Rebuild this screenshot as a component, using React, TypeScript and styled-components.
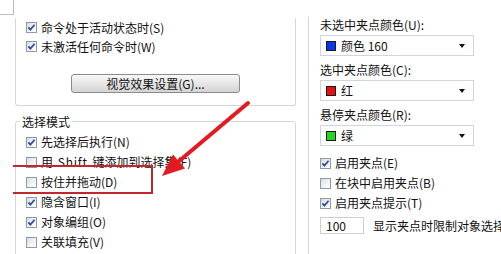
import React from "react";
import styled, { createGlobalStyle } from "styled-components";

const GlobalStyle = createGlobalStyle`
  html, body { margin: 0; padding: 0; background: #fff; }
  body {
    width: 501px;
    height: 254px;
    overflow: hidden;
    font-family: "Noto Sans CJK SC", "Noto Sans", sans-serif;
    font-size: 12px;
    color: #111;
  }
`;

const Page = styled.div`
  position: relative;
  width: 501px;
  height: 254px;
  overflow: hidden;
  display: flex;
  align-items: flex-start;
  background: #fff;
`;

const LeftCol = styled.div`
  width: 296px;
  flex-shrink: 0;
  display: flex;
  flex-direction: column;
`;

const Stub = styled.div`
  width: 14px;
  height: 15px;
  box-sizing: border-box;
  border-right: 1px solid #bdbdbd;
  border-bottom: 1px solid #bdbdbd;
`;

const UpperGroup = styled.div`
  margin: 3px 0 0 15px;
  width: 281px;
  height: 88px;
  box-sizing: border-box;
  border: 1px solid #d6d6d6;
  border-top: none;
  border-radius: 0 0 3px 3px;
  padding-left: 10px;
  display: flex;
  flex-direction: column;
`;

const LowerGroup = styled.div`
  margin: 15px 0 0 15px;
  width: 281px;
  height: 160px;
  box-sizing: border-box;
  border: 1px solid #d6d6d6;
  border-radius: 3px;
  padding-left: 10px;
  display: flex;
  flex-direction: column;
`;

const Legend = styled.div`
  margin: -8px 0 0 -6px;
  padding: 0 2px;
  width: fit-content;
  height: 16px;
  line-height: 16px;
  background: #fff;
`;

const RowList = styled.div<{ $top: number }>`
  margin-top: ${(p) => p.$top}px;
  display: flex;
  flex-direction: column;
`;

const CheckRow = styled.div<{ $h: number }>`
  height: ${(p) => p.$h}px;
  display: flex;
  align-items: center;
  gap: 4px;
  white-space: nowrap;
  line-height: 16px;
`;

const Box = styled.span`
  width: 11px;
  height: 11px;
  box-sizing: border-box;
  border: 1px solid #8d9aa7;
  background: linear-gradient(135deg, #d9dcdf 0%, #f4f4f4 60%, #ffffff 100%);
  display: flex;
  align-items: center;
  justify-content: center;
  flex-shrink: 0;
`;

const Latin = styled.span`
  letter-spacing: 0.8px;
  margin: 0 2px;
`;

const VisualButton = styled.div`
  margin: 18px 0 0 45px;
  width: 169px;
  height: 19px;
  box-sizing: border-box;
  border: 1px solid #8c8c8c;
  border-radius: 3px;
  background: linear-gradient(#f8f8f8, #e8e8e8 45%, #d4d4d4);
  display: flex;
  align-items: center;
  justify-content: center;
  line-height: 16px;
`;

const RightCol = styled.div`
  margin: 17px 0 0 12px;
  width: 230px;
  height: 260px;
  flex-shrink: 0;
  box-sizing: border-box;
  border-left: 1px solid #d6d6d6;
  padding-left: 11px;
  display: flex;
  flex-direction: column;
`;

const FieldLabel = styled.div<{ $top: number }>`
  margin-top: ${(p) => p.$top}px;
  height: 16px;
  line-height: 16px;
  white-space: nowrap;
`;

const Dropdown = styled.div`
  margin-top: 2px;
  width: 154px;
  height: 21px;
  box-sizing: border-box;
  border: 1px solid #cfd5da;
  background: #fff;
  display: flex;
  align-items: center;
  gap: 5px;
  padding: 0 8px 0 5px;
  line-height: 16px;
  white-space: nowrap;
`;

const Swatch = styled.span<{ $color: string }>`
  width: 10px;
  height: 10px;
  box-sizing: border-box;
  border: 1px solid #1a1a1a;
  background: ${(p) => p.$color};
  flex-shrink: 0;
`;

const DropArrow = styled.span`
  margin-left: auto;
  width: 0;
  height: 0;
  border-left: 3.5px solid transparent;
  border-right: 3.5px solid transparent;
  border-top: 4px solid #111;
`;

const InputRow = styled.div`
  margin-top: 4px;
  display: flex;
  align-items: center;
  gap: 9px;
  white-space: nowrap;
  line-height: 16px;
`;

const NumInput = styled.input`
  width: 44px;
  height: 17px;
  box-sizing: border-box;
  border: 1px solid #cfcfcf;
  padding: 0 0 0 5px;
  margin: 0;
  font-family: "Noto Sans CJK SC", "Noto Sans", sans-serif;
  font-size: 12px;
  color: #111;
  outline: none;
  background: #fff;
`;

const RedBox = styled.div`
  position: absolute;
  left: 13px;
  top: 165px;
  width: 140px;
  height: 29px;
  box-sizing: border-box;
  border: 2px solid #c3272e;
  border-left: none;
  pointer-events: none;
`;

const ArrowLayer = styled.svg`
  position: absolute;
  left: 0;
  top: 0;
  width: 501px;
  height: 254px;
  pointer-events: none;
`;

const Check: React.FC<{
  checked?: boolean;
  label: React.ReactNode;
  h?: number;
}> = ({ checked, label, h = 20 }) => (
  <CheckRow $h={h}>
    <Box>
      {checked && (
        <svg width="9" height="9" viewBox="0 0 9 9">
          <path
            d="M1.4 4.4 L3.4 6.6 L7.6 1.8"
            fill="none"
            stroke="#2b4aa3"
            strokeWidth="1.7"
          />
        </svg>
      )}
    </Box>
    <span>{label}</span>
  </CheckRow>
);

export default function App() {
  return (
    <>
      <GlobalStyle />
      <Page>
        <LeftCol>
          <Stub />
          <UpperGroup>
            <RowList $top={0}>
              <Check checked h={19} label="命令处于活动状态时(S)" />
              <Check checked h={19} label="未激活任何命令时(W)" />
            </RowList>
            <VisualButton>视觉效果设置(G)...</VisualButton>
          </UpperGroup>
          <LowerGroup>
            <Legend>选择模式</Legend>
            <RowList $top={2}>
              <Check checked label="先选择后执行(N)" />
              <Check
                label={
                  <>
                    用 <Latin>Shift</Latin> 键添加到选择集(F)
                  </>
                }
              />
              <Check label="按住并拖动(D)" />
              <Check checked label="隐含窗口(I)" />
              <Check checked label="对象编组(O)" />
              <Check label="关联填充(V)" />
            </RowList>
          </LowerGroup>
        </LeftCol>
        <RightCol>
          <FieldLabel $top={0}>未选中夹点颜色(U):</FieldLabel>
          <Dropdown>
            <Swatch $color="#0a35e8" />
            <span>颜色 160</span>
            <DropArrow />
          </Dropdown>
          <FieldLabel $top={6}>选中夹点颜色(C):</FieldLabel>
          <Dropdown>
            <Swatch $color="#ea1010" />
            <span>红</span>
            <DropArrow />
          </Dropdown>
          <FieldLabel $top={6}>悬停夹点颜色(R):</FieldLabel>
          <Dropdown>
            <Swatch $color="#22d622" />
            <span>绿</span>
            <DropArrow />
          </Dropdown>
          <RowList $top={7}>
            <Check checked label="启用夹点(E)" />
            <Check label="在块中启用夹点(B)" />
            <Check checked label="启用夹点提示(T)" />
          </RowList>
          <InputRow>
            <NumInput readOnly defaultValue="100" />
            <span>显示夹点时限制对象选择</span>
          </InputRow>
        </RightCol>
        <RedBox />
        <ArrowLayer viewBox="0 0 501 254">
          <line
            x1="248"
            y1="103"
            x2="178"
            y2="162"
            stroke="#e21b22"
            strokeWidth="4"
            strokeLinecap="round"
          />
          <polygon points="162,176 185,168.5 173,154.5" fill="#e21b22" />
        </ArrowLayer>
      </Page>
    </>
  );
}
